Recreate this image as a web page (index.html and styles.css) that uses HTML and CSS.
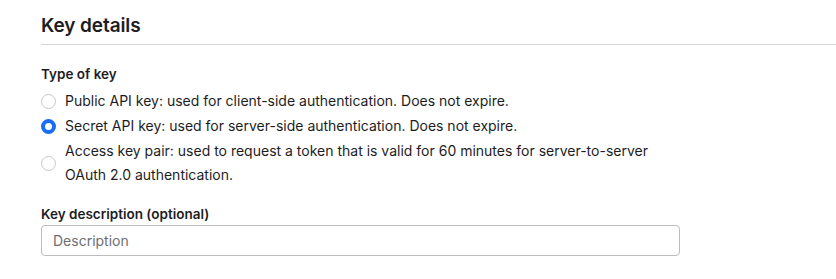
FILE: index.html
```html
<!DOCTYPE html>
<html>
<head>
<meta charset="utf-8">
<link rel="stylesheet" href="styles.css">
</head>
<body>
<section class="panel">
  <h2 class="title">Key details</h2>
  <div class="divider"></div>
  <fieldset class="group">
    <legend class="label">Type of key</legend>
    <label class="option">
      <span class="radio"></span>
      <span class="option-text">Public API key: used for client-side authentication. Does not expire.</span>
    </label>
    <label class="option">
      <span class="radio checked"></span>
      <span class="option-text">Secret API key: used for server-side authentication. Does not expire.</span>
    </label>
    <label class="option">
      <span class="radio"></span>
      <span class="option-text">Access key pair: used to request a token that is valid for 60 minutes for server-to-server<br>OAuth 2.0 authentication.</span>
    </label>
  </fieldset>
  <div class="field">
    <label class="label" for="desc">Key description (optional)</label>
    <input class="input" id="desc" type="text" placeholder="Description">
  </div>
</section>
</body>
</html>
```
FILE: styles.css
```css
* { box-sizing: border-box; }
html, body { margin: 0; padding: 0; background: #fff; }
body {
  font-family: Inter, "Liberation Sans", Arial, sans-serif;
  color: #1d1d1f;
  font-size: 14px;
}
.panel {
  padding: 14px 0 0 41px;
}
.title {
  margin: 0;
  font-size: 19px;
  font-weight: 600;
  line-height: 24px;
  letter-spacing: -0.1px;
}
.divider {
  margin-top: 6px;
  height: 1px;
  background: #d6d6d6;
}
.group {
  border: 0;
  margin: 20px 0 0 0;
  padding: 0;
  display: flex;
  flex-direction: column;
  gap: 1px;
}
.label {
  display: block;
  font-size: 13.5px;
  font-weight: 600;
  line-height: 18px;
  padding: 0;
  margin: 0;
}
.group .label { margin-bottom: 6px; }
.option {
  display: flex;
  align-items: center;
  gap: 9px;
  font-size: 14px;
  line-height: 24px;
}
.radio {
  flex: none;
  width: 15px;
  height: 15px;
  border-radius: 50%;
  border: 1px solid #c8c8c8;
  background: #fff;
}
.radio.checked {
  border: 4.5px solid #1a6df5;
  background: #fff;
}
.field {
  margin-top: 18px;
  width: 639px;
}
.field .label { margin-bottom: 2px; }
.input {
  display: block;
  width: 100%;
  height: 31px;
  border: 1px solid #bdbdbd;
  border-radius: 4px;
  padding: 0 11px;
  font-family: inherit;
  font-size: 14px;
  color: #1d1d1f;
  outline: none;
}
.input::placeholder { color: #6e6e73; }
```
